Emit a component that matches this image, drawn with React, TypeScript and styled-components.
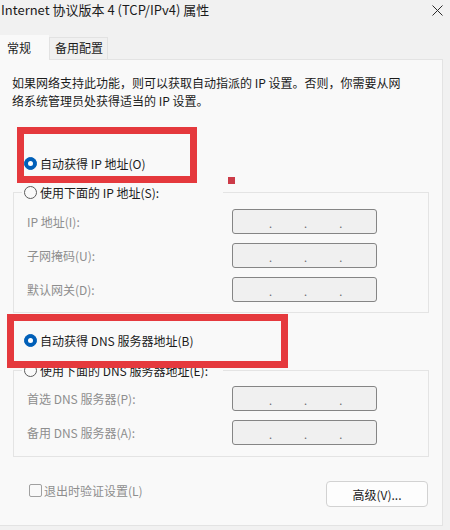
import React from "react";
import styled, { createGlobalStyle } from "styled-components";

const Global = createGlobalStyle`
  html, body { margin: 0; padding: 0; background: #f0f0f0; }
  body { font-family: "Noto Sans CJK SC", "Noto Sans", sans-serif; font-size: 12px; color: #1b1b1b; }
  * { box-sizing: border-box; }
`;

const Window = styled.div`
  width: 450px;
  height: 530px;
  background: #f1f1f1;
  overflow: hidden;
`;

const TitleBar = styled.div`
  height: 33px;
  display: flex;
  justify-content: space-between;
  align-items: flex-start;
  padding: 1px 7px 0 1px;
`;

const Title = styled.div`
  font-size: 13px;
  line-height: 18px;
  color: #1b1b1b;
  white-space: nowrap;
`;

const Close = styled.svg`
  margin-top: 4px;
  width: 11px;
  height: 11px;
`;

const TabRow = styled.div`
  display: flex;
  align-items: flex-end;
  height: 26px;
`;

const Tab = styled.div<{ $active?: boolean }>`
  position: relative;
  z-index: ${(p) => (p.$active ? 2 : 1)};
  height: ${(p) => (p.$active ? "25px" : "22px")};
  margin-bottom: ${(p) => (p.$active ? "-1px" : "0")};
  padding: ${(p) => (p.$active ? "3px 17px 0 6px" : "1px 4px 0 5px")};
  background: ${(p) => (p.$active ? "#f9f9f9" : "#f0f0f0")};
  border: 1px solid ${(p) => (p.$active ? "#f9f9f9" : "#e2e2e2")};
  border-bottom: none;
  font-size: 12px;
  line-height: 18px;
  color: #1b1b1b;
`;

const Panel = styled.div`
  position: relative;
  width: 443px;
  height: 467px;
  background: #f9f9f9;
  border-top: 1px solid #e3e3e3;
  border-right: 1px solid #e3e3e3;
  border-bottom: 1px solid #e3e3e3;
  padding: 0 13px 0 12px;
  display: flex;
  flex-direction: column;
`;

const Desc = styled.div`
  margin-top: 14px;
  font-size: 12px;
  line-height: 18px;
  color: #1b1b1b;
  span { display: block; white-space: nowrap; }
`;

const RadioRow = styled.label<{ $top: number }>`
  display: flex;
  align-items: center;
  gap: 3px;
  height: 18px;
  margin-top: ${(p) => p.$top}px;
  margin-left: 12px;
  font-size: 12px;
  color: #1b1b1b;
  white-space: nowrap;
`;

const Radio = styled.span<{ $checked?: boolean }>`
  width: 13px;
  height: 13px;
  border-radius: 50%;
  flex: none;
  background: ${(p) => (p.$checked ? "#005fb8" : "#fafafa")};
  border: 1px solid ${(p) => (p.$checked ? "#005fb8" : "#5c5c5c")};
  display: flex;
  align-items: center;
  justify-content: center;
  &::after {
    content: "";
    display: ${(p) => (p.$checked ? "block" : "none")};
    width: 5px;
    height: 5px;
    border-radius: 50%;
    background: #ffffff;
  }
`;

const Group = styled.fieldset<{ $top: number; $bottom: number }>`
  margin: ${(p) => p.$top}px 0 0 1px;
  padding: 0 0 ${(p) => p.$bottom}px 13px;
  border: 1px solid #e4e4e4;
  min-width: 0;
`;

const Legend = styled.legend`
  width: 201px;
  height: 18px;
  margin-left: -5px;
  padding: 0 0 0 2px;
  display: flex;
  align-items: center;
  gap: 3px;
  font-size: 12px;
  color: #1b1b1b;
  white-space: nowrap;
`;

const Rows = styled.div<{ $top: number }>`
  margin-top: ${(p) => p.$top}px;
  display: flex;
  flex-direction: column;
  gap: 9px;
`;

const FieldRow = styled.div`
  display: grid;
  grid-template-columns: 205px 145px;
  align-items: center;
  height: 25px;
`;

const FieldLabel = styled.span`
  color: #8e8e8e;
  font-size: 12px;
  white-space: nowrap;
`;

const IpBox = styled.div`
  height: 25px;
  background: #f0f0f0;
  border: 1px solid #858585;
  border-radius: 3px;
  display: flex;
  align-items: center;
  padding: 4px 0 0 36px;
  gap: 32px;
`;

const Dot = styled.span`
  color: #6a6a6a;
  font-size: 11px;
  line-height: 1;
`;

const Footer = styled.div`
  margin-top: 24px;
  display: flex;
  justify-content: space-between;
  align-items: flex-start;
  padding-left: 17px;
`;

const CheckLabel = styled.label`
  display: flex;
  align-items: center;
  gap: 2px;
  height: 18px;
  color: #8e8e8e;
  font-size: 12px;
  white-space: nowrap;
`;

const CheckBox = styled.span`
  width: 13px;
  height: 13px;
  border: 1px solid #a0a0a0;
  border-radius: 2px;
  background: #f9f9f9;
`;

const Button = styled.button`
  width: 102px;
  height: 26px;
  margin-right: 1px;
  background: #fdfdfd;
  border: 1px solid #d2d2d2;
  border-radius: 4px;
  font-family: "Noto Sans CJK SC", "Noto Sans", sans-serif;
  font-size: 12px;
  color: #1b1b1b;
  padding: 0;
`;

const Highlight = styled.div<{ $x: number; $y: number; $w: number; $h: number }>`
  position: absolute;
  left: ${(p) => p.$x}px;
  top: ${(p) => p.$y}px;
  width: ${(p) => p.$w}px;
  height: ${(p) => p.$h}px;
  border: 7px solid #e5393d;
  pointer-events: none;
`;

const Marker = styled.div`
  position: absolute;
  left: 228px;
  top: 117px;
  width: 7px;
  height: 7px;
  background: #cc3b48;
`;

const IpField = ({ label }: { label: string }) => (
  <FieldRow>
    <FieldLabel>{label}</FieldLabel>
    <IpBox>
      <Dot>.</Dot>
      <Dot>.</Dot>
      <Dot>.</Dot>
    </IpBox>
  </FieldRow>
);

export default function App() {
  return (
    <Window>
      <Global />
      <TitleBar>
        <Title>Internet 协议版本 4 (TCP/IPv4) 属性</Title>
        <Close viewBox="0 0 11 11">
          <path d="M0.5 0.5 L10.5 10.5 M10.5 0.5 L0.5 10.5" stroke="#2b2b2b" strokeWidth="1" fill="none" />
        </Close>
      </TitleBar>
      <TabRow>
        <Tab $active>常规</Tab>
        <Tab>备用配置</Tab>
      </TabRow>
      <Panel>
        <Desc>
          <span>如果网络支持此功能，则可以获取自动指派的 IP 设置。否则，你需要从网</span>
          <span>络系统管理员处获得适当的 IP 设置。</span>
        </Desc>
        <RadioRow $top={44}>
          <Radio $checked />
          自动获得 IP 地址(O)
        </RadioRow>
        <Group $top={11} $bottom={10}>
          <Legend>
            <Radio />
            使用下面的 IP 地址(S):
          </Legend>
          <Rows $top={8}>
            <IpField label="IP 地址(I):" />
            <IpField label="子网掩码(U):" />
            <IpField label="默认网关(D):" />
          </Rows>
        </Group>
        <RadioRow $top={18}>
          <Radio $checked />
          自动获得 DNS 服务器地址(B)
        </RadioRow>
        <Group $top={12} $bottom={11}>
          <Legend>
            <Radio />
            使用下面的 DNS 服务器地址(E):
          </Legend>
          <Rows $top={7}>
            <IpField label="首选 DNS 服务器(P):" />
            <IpField label="备用 DNS 服务器(A):" />
          </Rows>
        </Group>
        <Footer>
          <CheckLabel>
            <CheckBox />
            退出时验证设置(L)
          </CheckLabel>
          <Button>高级(V)...</Button>
        </Footer>
        <Highlight $x={17} $y={67} $w={180} $h={56} />
        <Highlight $x={7} $y={254} $w={281} $h={54} />
        <Marker />
      </Panel>
    </Window>
  );
}
